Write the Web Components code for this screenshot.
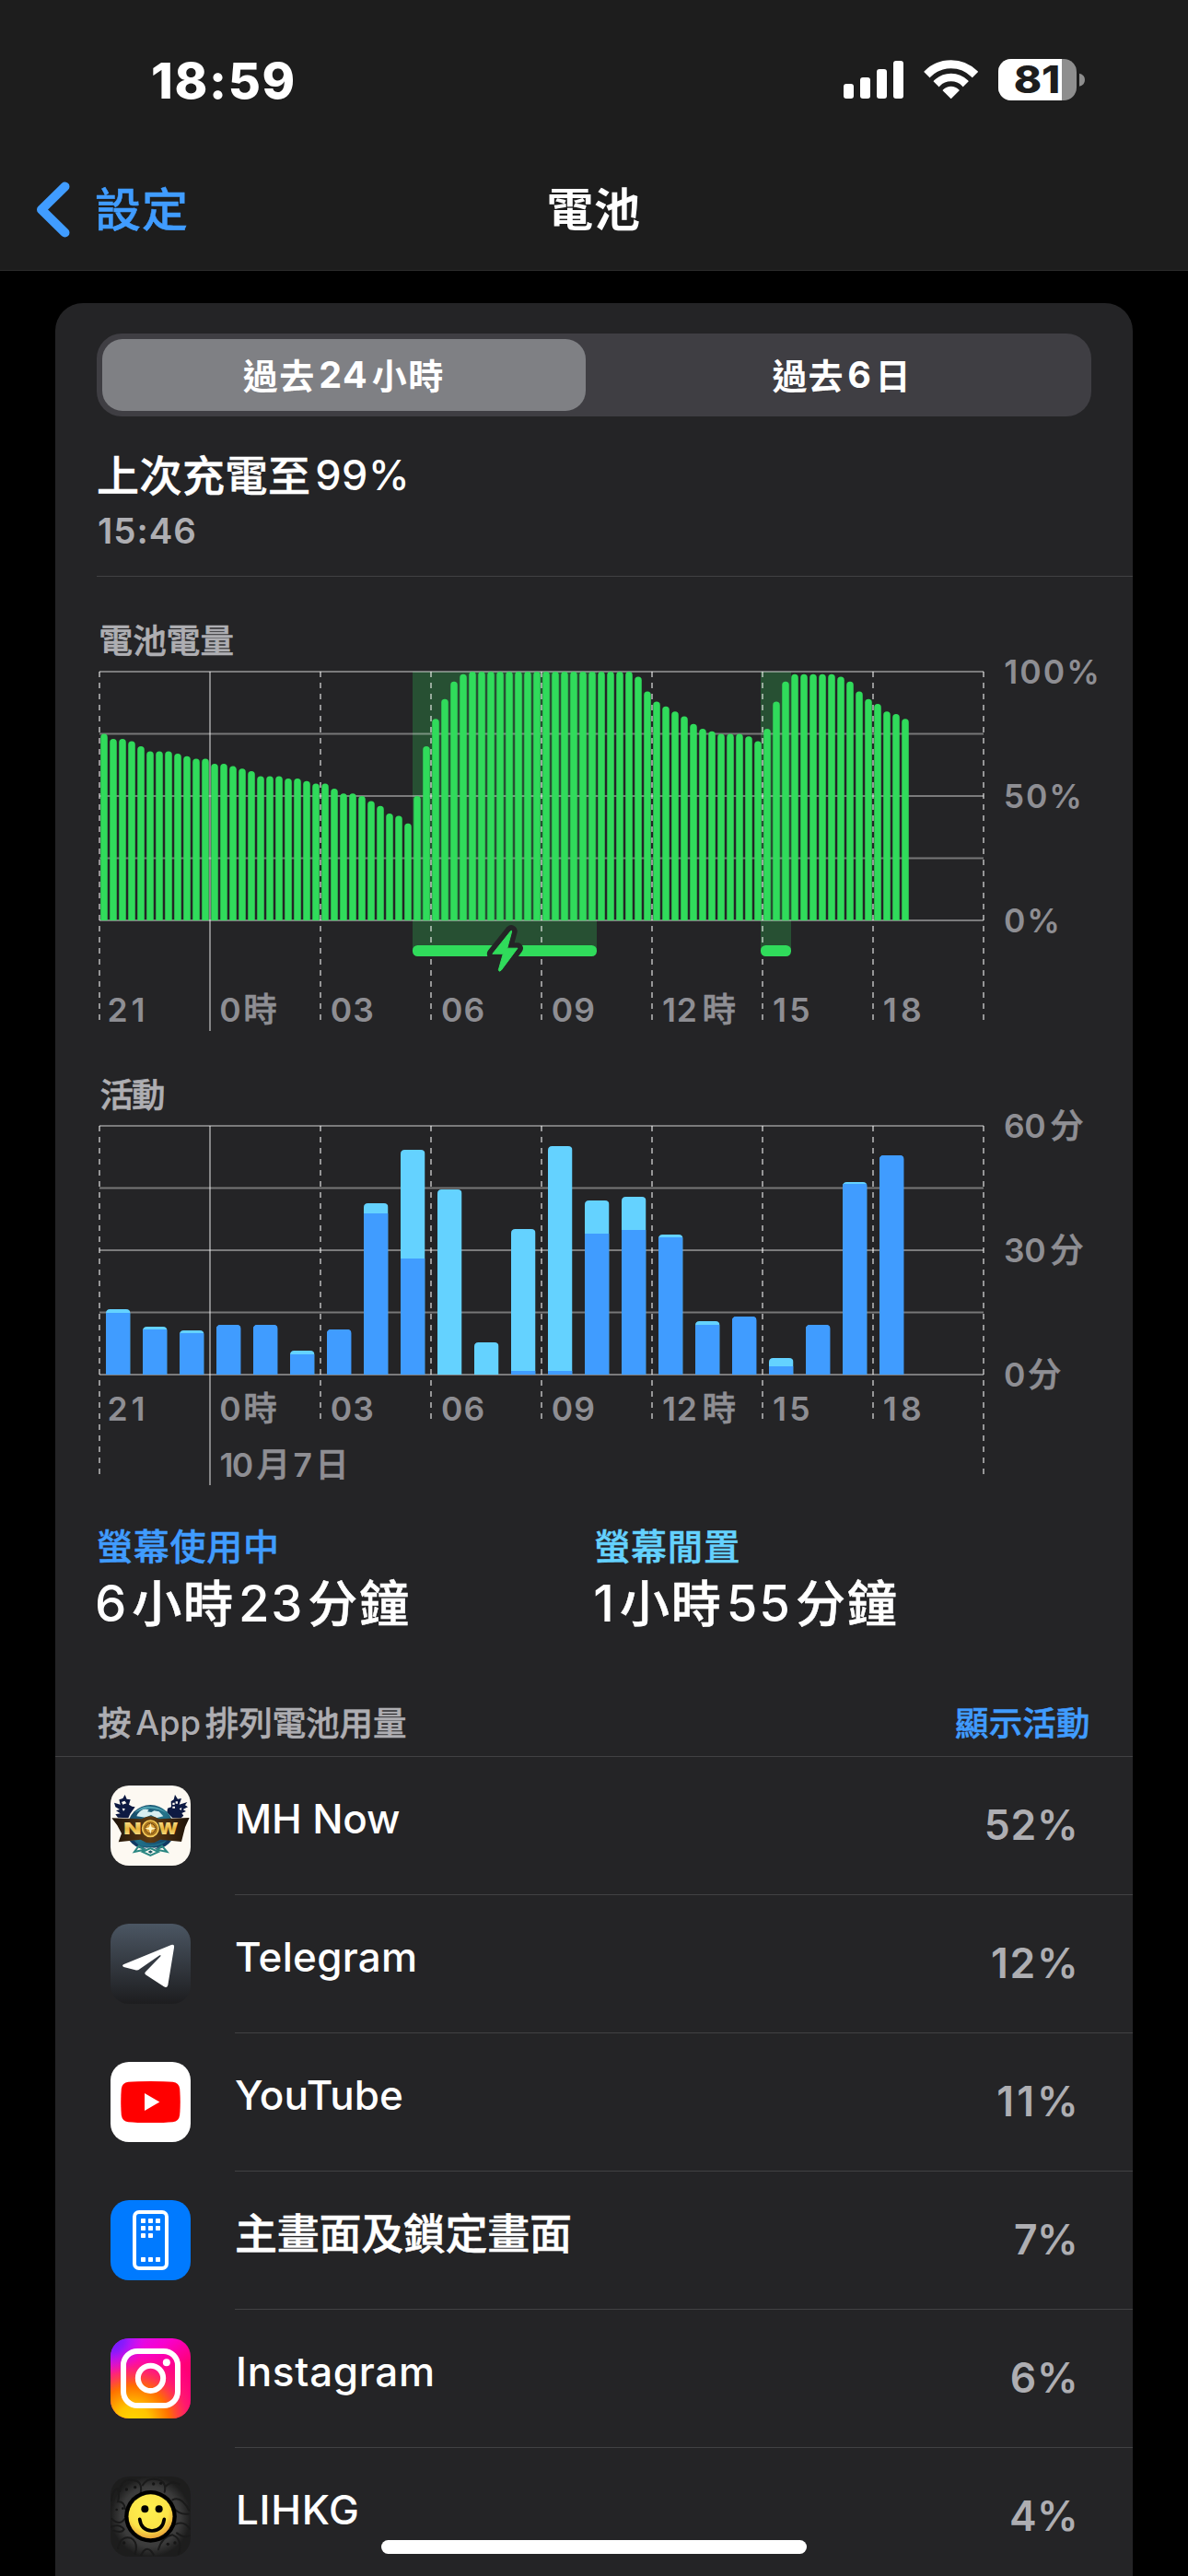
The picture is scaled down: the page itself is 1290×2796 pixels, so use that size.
<!DOCTYPE html>
<html lang="zh-Hant-HK">
<head>
<meta charset="utf-8">
<title>電池</title>
<style>
html,body{margin:0;background:#000}
body{width:1290px;height:2796px;overflow:hidden;font-family:Inter,"Noto Sans CJK TC",sans-serif;color:#fff}
</style>
</head>
<body>
<battery-screen></battery-screen>
<script>
const FONT = 'Inter,"Noto Sans CJK TC",sans-serif';
const ctx = document.createElement('canvas').getContext('2d');
const isCjk = c => /[\u2e80-\u9fff\uf900-\ufaff]/.test(c);

// Side bearings of one character, used to align the visible edge of a text.
function bearing(ch, size, weight) {
  ctx.font = `${weight} ${size}px ${FONT}`;
  const m = ctx.measureText(ch);
  return { left: -m.actualBoundingBoxLeft, right: m.width - m.actualBoundingBoxRight };
}
function runs(text) {
  return text.match(/[\u2e80-\u9fff\uf900-\ufaff]+|[^\u2e80-\u9fff\uf900-\ufaff]+/g) || [];
}

// Text with separate sizes for Latin and CJK runs, tracked to a given measure.
class MixedText extends HTMLElement {
  connectedCallback() {
    const text = this.getAttribute('text');
    const size = +this.getAttribute('size');
    const cjk = +(this.getAttribute('cjk') || size);
    const weight = this.getAttribute('weight') || 500;
    const lh = this.getAttribute('lh') || 60;
    const gap = +(this.getAttribute('gap') || 0.13);
    const root = this.attachShadow({ mode: 'open' });
    root.innerHTML = `<style>
      :host{display:block;width:max-content;white-space:nowrap;font-family:${FONT};font-weight:${weight};font-size:${size}px;line-height:${lh}px}
      .c{font-size:${cjk}px;line-height:0;position:relative;top:1px;-webkit-text-stroke:${+weight > 500 ? 0 : .5}px currentColor}
      .l{line-height:0}
      .c+.l,.l+.c{margin-left:${gap * cjk}px}
    </style><div class="t">${runs(text).map(r => `<span class="${isCjk(r[0]) ? 'c' : 'l'}">${r}</span>`).join('')}</div>`;
    const ink = +this.getAttribute('ink');
    if (!ink) return;
    const t = root.querySelector('.t');
    const first = text[0], last = text[text.length - 1];
    const lb = bearing(first, isCjk(first) ? cjk : size, weight).left;
    const rb = bearing(last, isCjk(last) ? cjk : size, weight).right;
    const track = (ink + lb + rb - t.getBoundingClientRect().width) / (text.length - 1);
    t.style.letterSpacing = track + 'px';
    t.style.marginLeft = -lb + 'px';
    this.style.width = ink + 'px';
  }
}
customElements.define('mixed-text', MixedText);

class StatusBar extends HTMLElement {
  connectedCallback() {
    this.attachShadow({ mode: 'open' }).innerHTML = `<style>
      :host{display:flex;height:176px;align-items:center;justify-content:space-between;padding:0 90px 0 166px;box-sizing:border-box}
      svg{display:block;width:300px;height:100px;margin-top:4px}
    </style>
    <mixed-text text="18:59" size="54" weight="800" ink="152.5"></mixed-text>
    <svg viewBox="0 0 900 300">
      <defs>
        <clipPath id="w"><path d="M398 202L300 104V40H496V104Z"/></clipPath>
        <clipPath id="b"><rect x="552" y="72" width="255" height="135" rx="42"/></clipPath>
      </defs>
      <g fill="#fff"><rect x="48" y="153" width="33" height="48" rx="9"/><rect x="102" y="132" width="33" height="69" rx="9"/><rect x="156" y="105" width="33" height="96" rx="9"/><rect x="210" y="78" width="33" height="123" rx="9"/></g>
      <g clip-path="url(#w)" fill="none" stroke="#fff">
        <circle cx="398" cy="197" r="108" stroke-width="27"/><circle cx="398" cy="197" r="65" stroke-width="26"/><circle cx="398" cy="197" r="18" stroke-width="36"/>
      </g>
      <g clip-path="url(#b)"><rect x="552" y="72" width="255" height="135" fill="#8e8e8e"/><rect x="552" y="72" width="207" height="135" fill="#fff"/></g>
      <path d="M816 119Q834 124 834 140Q834 156 816 161Z" fill="#8e8e8e"/>
      <text x="602" y="184" font-family="Inter" font-weight="800" font-size="122" fill="#1d1d1d" textLength="152" lengthAdjust="spacingAndGlyphs">81</text>
    </svg>`;
  }
}
customElements.define('status-bar', StatusBar);

class NavBar extends HTMLElement {
  connectedCallback() {
    this.attachShadow({ mode: 'open' }).innerHTML = `<style>
      :host{display:grid;grid-template-columns:1fr auto 1fr;align-items:center;height:118px;padding:0 0 15px 38px;box-sizing:border-box;border-bottom:1px solid #2b2b2c}
      .back{display:flex;align-items:center;gap:29px;color:#409cff}
      svg{width:38px;height:62px;display:block}
      .title{margin-left:-38px}
    </style>
    <div class="back"><svg viewBox="0 0 38 62"><path d="M32.500 6.500L7 31.500L32.500 56.500" fill="none" stroke="#409cff" stroke-width="10" stroke-linecap="round" stroke-linejoin="round"/></svg><mixed-text text="設定" size="50" cjk="50" weight="500" ink="98"></mixed-text></div>
    <mixed-text class="title" text="電池" size="50" cjk="50" weight="700" ink="98"></mixed-text><span></span>`;
  }
}
customElements.define('nav-bar', NavBar);

class SegmentedControl extends HTMLElement {
  connectedCallback() {
    this.attachShadow({ mode: 'open' }).innerHTML = `<style>
      :host{display:flex;height:90px;padding:6px;box-sizing:border-box;border-radius:27px;background:#3f3e43}
      .s{flex:1;display:flex;align-items:center;justify-content:center;border-radius:22px;padding-left:7px}
      .on{background:#7f8084;flex:0 0 525px;box-sizing:border-box;padding:0 3px 0 0}
    </style>
    <div class="s on"><mixed-text text="過去24小時" size="39.500" cjk="38" weight="700" gap=".1" ink="216.5"></mixed-text></div>
    <div class="s"><mixed-text text="過去6日" size="39.500" cjk="38" weight="700" gap=".1" ink="145"></mixed-text></div>`;
  }
}
customElements.define('segmented-control', SegmentedControl);

// Shared grid, labels and canvas for both charts.
class ChartBase extends HTMLElement {
  label(text, x, cy, ink, fill = '#8e8e93', size = 35.5, cjk = 36.5) {
    const first = text[0], last = text[text.length - 1];
    const lb = bearing(first, isCjk(first) ? cjk : size, isCjk(first) ? 500 : 600).left;
    const rb = bearing(last, isCjk(last) ? cjk : size, isCjk(last) ? 500 : 600).right;
    const base = cy + (isCjk(first) ? cjk * 0.38 : size * 0.364);
    const parts = runs(text);
    const spans = parts.map((r, i) => `<tspan font-size="${isCjk(r[0]) ? cjk : size}" ${isCjk(r[0]) ? `font-weight="500" stroke="${fill}" stroke-width=".6"` : 'font-weight="600"'}${i ? ' dx="5"' : ''}>${r}</tspan>`).join('');
    return `<text x="${x - lb}" y="${base}" fill="${fill}" data-len="${ink + lb + rb - 5 * (parts.length - 1)}">${spans}</text>`;
  }
  grid(top, low, mid, high) {
    let s = '';
    for (let i = 0; i < 5; i++) {
      const y = top + i * 67.5;
      s += `<rect x="108" y="${y - 1}" width="960" height="2" fill="#fff" opacity="${i % 2 ? .38 : .4}"/>`;
    }
    for (let i = 0; i < 9; i++) {
      const x = 108 + i * 120;
      if (i === 1) s += `<rect x="227" y="${top}" width="2" height="${high - top}" fill="#fff" opacity=".45"/>`;
      else s += `<path d="M${x} ${top}V${i === 0 || i === 8 ? mid : low}" stroke="#fff" stroke-width="2" stroke-dasharray="6 6" opacity=".52"/>`;
    }
    return s;
  }
  hours(cy) {
    return [['21', 118.5, 37], ['0時', 239.3, 61], ['03', 359.7, 44.5], ['06', 480, 44.5], ['09', 599.7, 44.7], ['12時', 720, 78.5], ['15', 840, 38.2], ['18', 959.7, 39.3]]
      .map(h => this.label(h[0], h[1], cy, h[2])).join('');
  }
  mount(y, h, body) {
    const root = this.attachShadow({ mode: 'open' });
    root.innerHTML = `<style>:host{display:block}svg{display:block;width:1170px;height:${h}px;font-family:${FONT}}</style>
      <svg viewBox="60 ${y} 1170 ${h}">${body}</svg>`;
    root.querySelectorAll('text').forEach(t => {
      const n = t.textContent.length - 1;
      const w = [...t.children].reduce((a, s) => a + s.getComputedTextLength(), 0);
      if (n) t.setAttribute('letter-spacing', (+t.dataset.len - w) / n);
    });
  }
}

class LevelChart extends ChartBase {
  connectedCallback() {
    const levels = [75,73,73,72,70,68,68,68,67,66,65,65,63,63,62,61,60,58,58,58,57,57,56,55,
      55,53,51,51,50,48,46,43,42,39,50,70,81,89,96,99,...Array(18).fill(100),98,92,
      88,86,84,82,79,77,76,75,75,75,74,72,77,88,96,99,99,99,99,99,98,96,92,89,87,84,83,81];
    const bars = levels.map((v, i) => {
      const x = 109.25 + i * 10, y = 999 - v * 2.7, r = 3.75;
      return `<path d="M${x} 999V${y + r}a${r} ${r} 0 0 1 7.500 0V999Z"/>`;
    }).join('');
    const bolt = 'M554.600 1010.500L534.800 1035.300H546.300L541.300 1052.800Q542 1055.500 544.300 1053L562 1029.200H550.800L555.700 1011Q555.600 1009.600 554.600 1010.500Z';
    this.mount(626, 524, `
      <g fill="#275033"><rect x="448" y="729" width="200" height="303"/><rect x="826" y="729" width="33" height="303"/></g>
      ${this.grid(729, 1113, 1113, 1119)}
      <g fill="#30db5b">${bars}
        <rect x="448" y="1026" width="200" height="12" rx="5.500"/><rect x="826" y="1026" width="33" height="12" rx="5.500"/></g>
      <clipPath id="top"><rect x="520" y="1000" width="60" height="38.500"/></clipPath>
      <path d="${bolt}" fill="#242426" stroke="#242426" stroke-width="12" stroke-linejoin="round" clip-path="url(#top)"/>
      <path d="${bolt}" fill="#30db5b" stroke="#30db5b" stroke-width="1" stroke-linejoin="round"/>
      ${this.label('電池電量', 109.500, 695.500, 143, '#aeaeb2')}
      ${this.label('100%', 1091.300, 729.300, 100)}${this.label('50%', 1091.700, 864.300, 80.500)}${this.label('0%', 1091, 999.300, 57.300)}
      ${this.hours(1096.300)}`);
  }
}
customElements.define('level-chart', LevelChart);

class ActivityChart extends ChartBase {
  connectedCallback() {
    // [total height, screen-on height] per hour, in chart pixels
    const data = [[71,67],[52,49],[48,45],[54,54],[54,54],[26,22],[49,49],[186,175],[244,126],[201,0],[35,0],[158,4],
      [248,4],[189,153],[193,157],[152,149],[58,54],[63,63],[18,9],[54,54],[209,207],[238,238]];
    const bars = data.map(([t, on], i) => {
      const x = 115 + i * 40, y = 1492 - t;
      return `<clipPath id="c${i}"><path d="M${x} 1492V${y + 4.500}q0 -4.500 4.500 -4.500h17.500q4.500 0 4.500 4.500V1492Z"/></clipPath>
        <g clip-path="url(#c${i})"><rect x="${x}" y="${y}" width="26.500" height="${t}" fill="${t === on ? '#409cff' : '#64d2ff'}"/><rect x="${x}" y="${1492 - on}" width="26.500" height="${on}" fill="#409cff"/></g>`;
    }).join('');
    this.mount(1150, 490, `${this.grid(1222, 1546, 1606, 1612)}${bars}
      ${this.label('活動', 109.500, 1188.500, 68.500, '#aeaeb2')}
      ${this.label('60分', 1091, 1222.300, 85.300)}${this.label('30分', 1091, 1357.300, 85.300)}${this.label('0分', 1091, 1492.300, 61)}
      ${this.hours(1529.300)}${this.label('10月7日', 239.500, 1590.300, 133.800)}`);
  }
}
customElements.define('activity-chart', ActivityChart);

const ICONS = {
  mh: `<svg viewBox="60 54 261 261"><defs>
      <linearGradient id="g" x1="0" y1="0" x2="0" y2="1"><stop offset="0" stop-color="#ffe9a0"/><stop offset=".5" stop-color="#e8b53a"/><stop offset="1" stop-color="#fff0a8"/></linearGradient>
      <linearGradient id="t" x1="0" y1="0" x2="1" y2="1"><stop offset="0" stop-color="#113a5c"/><stop offset=".5" stop-color="#24748a"/><stop offset="1" stop-color="#0d2a55"/></linearGradient>
      <linearGradient id="k" x1="0" y1="0" x2="1" y2="0"><stop offset="0" stop-color="#1c120a"/><stop offset=".5" stop-color="#5d3b14"/><stop offset="1" stop-color="#1c120a"/></linearGradient></defs>
      <rect x="60" y="54" width="261" height="261" fill="#fdf9f2"/>
      <g fill="#0e1a42"><path d="M72 110L92 116L88 100L100 96L107 84L113 98L125 100L120 116L130 122L140 124L124 146L118 160L84 158L76 148L92 145L78 136L90 132L76 124Z"/>
      <path d="M310 108L303 118L312 124L296 132L306 138L292 144L298 152L290 160H262L244 142L246 128L258 124L257 106L266 100L270 84L279 98L291 96L284 116Z"/></g>
      <path d="M96 108L106 104L112 112L100 116ZM98 128L108 130L102 138ZM262 110h7v7h-7ZM272 106h7v7h-7ZM262 122h8v6h-8ZM284 130l8 -4l-2 9Z" fill="#fdf9f2"/>
      <circle cx="190" cy="192" r="75" fill="url(#t)"/>
      <path d="M145 154Q152 136 172 130L185 133L180 139L193 141L202 136L218 139L232 154L210 160L192 150L174 158Z" fill="#d8eef0"/>
      <path d="M139 143Q160 118 190 122Q220 122 241 143Q218 130 190 129Q160 130 139 143Z" fill="#4fa0b0"/>
      <path d="M128 231Q154 262 190 256Q226 262 254 231L238 263L190 280L144 263Z" fill="#fdf9f2"/>
      <path d="M120 232Q145 264 178 260Q150 252 140 234ZM260 232Q236 264 202 260Q230 252 240 234Z" fill="#123a63"/>
      <path d="M134 231Q190 262 246 231Q228 253 190 252Q152 253 134 231Z" fill="#1f6d86"/>
      <g fill="none" stroke="#2b8782" stroke-width="6"><path d="M164 270L190 258L216 270L190 282Z"/><path d="M152 251L138 270L170 263Z"/><path d="M228 251L244 270L212 263Z"/></g>
      <path d="M182 270l8-5l8 5l-8 5z" fill="#175966"/>
      <path d="M64 160L162 163Q190 144 218 163L317 159L303 190L291 237L222 230Q190 252 158 230L86 238L96 210L82 184Z" fill="url(#k)"/>
      <g font-family="Inter" font-weight="900" font-size="50" fill="url(#g)"><text x="103" y="213" textLength="58" lengthAdjust="spacingAndGlyphs">N</text><text x="165" y="212" textLength="50" lengthAdjust="spacingAndGlyphs">O</text><text x="215" y="213" textLength="65" lengthAdjust="spacingAndGlyphs">W</text></g>
      <circle cx="190" cy="194" r="26" fill="#a87420" stroke="#f3c958" stroke-width="5"/><circle cx="190" cy="194" r="16" fill="#d89d36" stroke="#704711" stroke-width="3"/>
      <path d="M190 176l4 14 14 4-14 4-4 14-4-14-14-4 14-4z" fill="#fff5c0"/></svg>`,
  telegram: `<svg viewBox="60 504 261 261"><defs><linearGradient id="g" x1="0" y1="0" x2="0" y2="1"><stop offset="0" stop-color="#4b5663"/><stop offset="1" stop-color="#1d1d1f"/></linearGradient></defs>
      <rect x="60" y="504" width="261" height="261" fill="url(#g)"/>
      <path d="M102 637L258 573Q269 570 267 582L247 704Q244 715 234 709L174 670Q169 666 174 661L222 611Q227 605 220 607L156 651Q149 657 141 655L103 645Q96 641 102 637Z" fill="#fff"/></svg>`,
  youtube: `<svg viewBox="60 954 261 261"><rect x="60" y="954" width="261" height="261" fill="#fff"/>
      <path d="M190.500 1017Q238 1017 263 1019.500Q283 1022 285.500 1041Q289 1084 285.500 1127Q283 1147 263 1149.500Q238 1152 190.500 1152Q143 1152 118 1149.500Q98 1147 95.500 1127Q92 1084 95.500 1041Q98 1022 118 1019.500Q143 1017 190.500 1017Z" fill="red"/><path d="M171 1056L220 1084.500L171 1113Z" fill="#fff"/></svg>`,
  home: `<svg viewBox="60 84 261 261"><rect x="60" y="84" width="261" height="261" fill="#007aff"/>
      <rect x="138" y="123" width="105" height="183" rx="15" fill="none" stroke="#fff" stroke-width="12"/>
      <g fill="#fff">${[[159,144],[183,144],[207,144],[159,168],[183,168],[207,168],[159,192],[183,192],[159,270],[183,270],[207,270]].map(p => `<rect x="${p[0]}" y="${p[1]}" width="15" height="15" rx="2"/>`).join('')}</g></svg>`,
  instagram: `<svg viewBox="60 534 261 261"><defs>
      <linearGradient id="l" x1="0" y1="0" x2=".7" y2="1"><stop offset="0" stop-color="#c818ff"/><stop offset=".35" stop-color="#f800d0"/><stop offset=".65" stop-color="#ff0078"/><stop offset="1" stop-color="#ff0060"/></linearGradient>
      <radialGradient id="y" cx=".28" cy="1.050" r=".95"><stop offset="0" stop-color="#ffd800"/><stop offset=".22" stop-color="#ffc400"/><stop offset=".48" stop-color="#ff7000"/><stop offset=".72" stop-color="#ff2470" stop-opacity=".75"/><stop offset="1" stop-color="#ff00b0" stop-opacity="0"/></radialGradient>
      <radialGradient id="p" cx="0" cy="0" r=".45"><stop offset="0" stop-color="#5b1cff"/><stop offset=".4" stop-color="#7a1cff" stop-opacity=".8"/><stop offset="1" stop-color="#d010ff" stop-opacity="0"/></radialGradient></defs>
      <rect x="60" y="534" width="261" height="261" fill="url(#l)"/><rect x="60" y="534" width="261" height="261" fill="url(#y)"/><rect x="60" y="534" width="261" height="261" fill="url(#p)"/>
      <g fill="none" stroke="#fff" stroke-width="18"><rect x="102" y="576" width="177" height="177" rx="46"/><circle cx="190.500" cy="664" r="41"/></g><circle cx="242.500" cy="613" r="12" fill="#fff"/></svg>`,
  lihkg: `<svg viewBox="60 984 261 261"><defs><radialGradient id="b"><stop offset="0" stop-color="#555"/><stop offset=".75" stop-color="#3a3a3a"/><stop offset="1" stop-color="#1d1d1d"/></radialGradient>
      <radialGradient id="f" cx=".45" cy=".35" r=".65"><stop offset="0" stop-color="#fff04f"/><stop offset=".7" stop-color="#fbe447"/><stop offset="1" stop-color="#eaa53a"/></radialGradient></defs>
      <rect x="60" y="984" width="261" height="261" fill="url(#b)"/>
      <g fill="none" stroke="#1a1a1a" stroke-width="6" stroke-linecap="round">
        <path d="M90 1032Q96 990 130 996Q166 996 158 1038M165 1012Q180 986 214 994Q244 1002 236 1034M240 1016Q260 994 284 1010M62 1062Q70 1022 84 1024Q90 1044 84 1066Q104 1064 108 1090M64 1122Q90 1146 106 1122M62 1148Q90 1136 104 1156Q96 1170 70 1160M84 1218Q92 1176 126 1184Q152 1200 140 1236M160 1240Q178 1202 200 1238M216 1222Q228 1180 262 1174Q296 1186 282 1236M262 1060Q290 1046 316 1094M266 1086Q284 1110 314 1106M270 1140Q300 1126 318 1154M276 1168Q300 1186 318 1176"/></g>
      <g fill="#151515"><circle cx="112" cy="1026" r="5"/><circle cx="140" cy="1019" r="5"/><circle cx="80" cy="1092" r="4"/><circle cx="100" cy="1088" r="4"/><circle cx="200" cy="1008" r="5"/><circle cx="224" cy="1006" r="5"/><circle cx="247" cy="1204" r="5"/><circle cx="270" cy="1200" r="5"/><circle cx="104" cy="1200" r="5"/></g>
      <circle cx="190.500" cy="1114" r="85" fill="#000"/><circle cx="190.500" cy="1114" r="72" fill="url(#f)"/>
      <circle cx="172" cy="1090" r="12"/><circle cx="218" cy="1090" r="12"/><path d="M155 1123Q160 1160 195 1161Q230 1160 235 1123" fill="none" stroke="#000" stroke-width="11" stroke-linecap="round"/></svg>`
};

class AppIcon extends HTMLElement {
  connectedCallback() {
    this.attachShadow({ mode: 'open' }).innerHTML = `<style>:host{display:block;width:87px;height:87px;border-radius:20px;overflow:hidden}svg{display:block;width:87px;height:87px}</style>${ICONS[this.getAttribute('name')]}`;
  }
}
customElements.define('app-icon', AppIcon);

class AppRow extends HTMLElement {
  connectedCallback() {
    this.attachShadow({ mode: 'open' }).innerHTML = `<style>
      :host{display:flex;height:150px;padding-left:60px}
      app-icon{margin-top:31px;flex:none}
      .body{flex:1;display:flex;justify-content:space-between;margin-left:48px;padding:0 63px 0 0;border-bottom:1px solid #414143}
      .name{padding:37.300px 0 0 var(--lead)}
      .pct{padding-top:44px;color:#aeaeb2}
    </style><app-icon name="${this.getAttribute('icon')}"></app-icon>
    <div class="body"><div class="name"><slot name="name"></slot></div><div class="pct"><slot name="pct"></slot></div></div>`;
  }
}
customElements.define('app-row', AppRow);

class HomeIndicator extends HTMLElement {
  connectedCallback() {
    this.attachShadow({ mode: 'open' }).innerHTML = `<style>:host{position:absolute;left:414px;top:2757px;width:462px;height:15px;border-radius:8px;background:#fff}</style>`;
  }
}
customElements.define('home-indicator', HomeIndicator);

class BatteryScreen extends HTMLElement {
  connectedCallback() {
    const apps = [
      ['mh', 'MH Now', 176, '52%', 95.3, 3], ['telegram', 'Telegram', 194, '12%', 89, 1], ['youtube', 'YouTube', 180, '11%', 82.7, 1],
      ['home', '主畫面及鎖定畫面', 362, '7%', 65, 2], ['instagram', 'Instagram', 210, '6%', 68.3, 4], ['lihkg', 'LIHKG', 129, '4%', 69, 4]];
    this.attachShadow({ mode: 'open' }).innerHTML = `<style>
      :host{display:block;height:2796px;overflow:hidden}
      header{background:#1d1d1d}
      .card{margin:35px 60px 0;padding-top:33px;border-radius:30px 30px 0 0;background:#242426}
      segmented-control{margin:0 45px}
      .charge{margin:34px 0 0 47px}
      .charge .sub{margin:4.500px 0 24.500px;color:#aeaeb2}
      hr{border:0;margin:0 0 0 45px;height:1px;background:#414143}
      .stats{display:flex;padding:13.300px 0 0 46px;height:135px;box-sizing:border-box}
      .stats>div{width:540.300px}
      .stats .v{margin-top:1.700px}
      .head{display:flex;justify-content:space-between;padding:70px 48px 11px 46px;border-bottom:1px solid #414143;color:#aeaeb2}
    </style>
    <header><status-bar></status-bar><nav-bar></nav-bar></header>
    <div class="card">
      <segmented-control></segmented-control>
      <div class="charge"><mixed-text text="上次充電至99%" size="45" cjk="46" gap=".1" ink="333"></mixed-text>
      <mixed-text class="sub" text="15:46" size="38.500" weight="600" lh="50" ink="104.3"></mixed-text></div>
      <hr>
      <level-chart></level-chart>
      <activity-chart></activity-chart>
      <div class="stats">
        <div><mixed-text style="color:#409cff" text="螢幕使用中" size="39" lh="50" ink="194"></mixed-text><mixed-text class="v" text="6小時23分鐘" size="54.500" cjk="54" gap=".08" lh="70" ink="337"></mixed-text></div>
        <div><mixed-text style="color:#64d2ff" text="螢幕閒置" size="39" lh="50" ink="155"></mixed-text><mixed-text class="v" text="1小時55分鐘" size="54.500" cjk="54" gap=".08" lh="70" ink="326.5"></mixed-text></div>
      </div>
      <div class="head"><mixed-text text="按App排列電池用量" size="36.500" lh="50" ink="334"></mixed-text><mixed-text style="color:#409cff" text="顯示活動" size="36.500" lh="50" ink="144"></mixed-text></div>
      ${apps.map(a => `<app-row icon="${a[0]}" style="--lead:${a[5]}px"><mixed-text slot="name" text="${a[1]}" size="44" cjk="46" ink="${a[2]}"></mixed-text><mixed-text slot="pct" text="${a[3]}" size="44.500" weight="600" ink="${a[4]}"></mixed-text></app-row>`).join('')}
    </div>
    <home-indicator></home-indicator>`;
  }
}
customElements.define('battery-screen', BatteryScreen);
</script>
</body>
</html>
